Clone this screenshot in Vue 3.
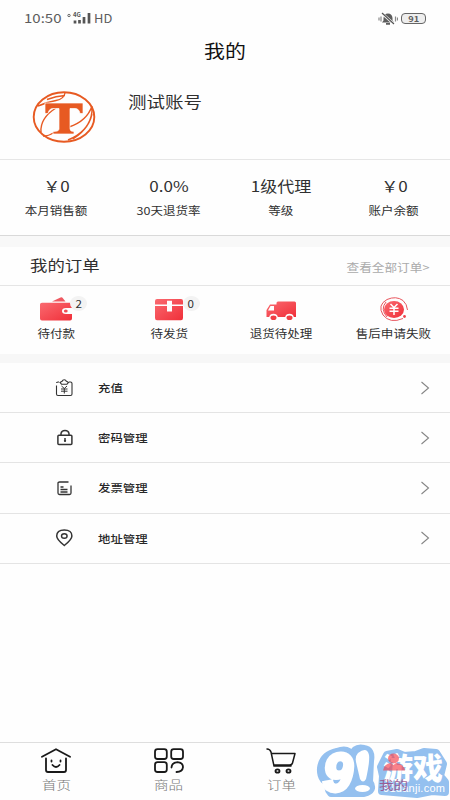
<script setup>
const stats = [
  { value: '￥0', label: '本月销售额', yen: true },
  { value: '0.0%', label: '30天退货率' },
  { value: '1级代理', label: '等级' },
  { value: '￥0', label: '账户余额', yen: true },
]
const orders = [
  { icon: 'wallet', label: '待付款', badge: '2' },
  { icon: 'box', label: '待发货', badge: '0' },
  { icon: 'truck', label: '退货待处理' },
  { icon: 'refund', label: '售后申请失败' },
]
const menu = [
  { icon: 'recharge', label: '充值' },
  { icon: 'lock', label: '密码管理' },
  { icon: 'invoice', label: '发票管理' },
  { icon: 'pin', label: '地址管理' },
]
const tabs = [
  { icon: 'home', label: '首页' },
  { icon: 'goods', label: '商品' },
  { icon: 'cart', label: '订单' },
  { icon: 'me', label: '' },
]
</script>

<template>
  <div class="screen">
    <div class="status">
      <div class="status-left">
        <span class="time"><span class="wide">10:50</span></span>
        <svg class="signal" width="25" height="14" viewBox="0 0 25 14">
          <circle cx="2" cy="4.500" r="1.200" fill="none" stroke="#666" />
          <text x="6" y="6.200" class="g4">4G</text>
          <path d="M8 9.500v3M12.500 9v3.500M17 6v6.500M22 2v10.500" stroke="#555" stroke-width="2.700" />
        </svg>
        <span class="hd"><span class="wide">HD</span></span>
      </div>
      <div class="status-right">
        <svg width="20" height="14" viewBox="0 0 20 14">
          <path d="M4 10.500l1.500-2V6Q6 1.500 10 1.500T14.500 6v2.500l1.500 2zM8 11h4v1.700H8z" fill="#5d5d5d" />
          <path d="M3 .5l13 11.500" stroke="#fff" stroke-width="2.600" />
          <path d="M4 1l12 11" stroke="#555" stroke-width="1.200" />
          <path d="M1 5.500v3M3 4.500v5M17.500 4.500v5M19.500 5.500v3" stroke="#888" stroke-width="1.200" />
        </svg>
        <div class="battery"><span class="wide">91</span></div>
      </div>
    </div>

    <header class="title"><span class="wide">我的</span></header>

    <section class="profile">
      <svg class="avatar" width="64" height="54" viewBox="0 0 64 54">
        <g fill="none" stroke="#e75a22">
          <ellipse cx="32" cy="27" rx="30.300" ry="24.700" stroke-width="1.900" />
          <path d="M6 16Q15 12 24 10.500Q32 9 33 3M15 9.500Q24 6 33 5.500M24 18Q8 28 9 42M11 46Q17 46 21 43M60 16Q55 31 37 37M60 17Q61 36 41 49M60 24Q56 42 36 50" stroke-width="1.400" />
        </g>
        <path d="M13 13h38v10.500h-3q-1-5-5-5h-5V39q0 2.500 4 2.500V44H21v-2.500q6 0 6-2.500V18.500h-6q-4 0-5 5h-3z" fill="#e75a22" stroke="#fff" stroke-width=".7" />
      </svg>
      <span class="name wide">测试账号</span>
    </section>

    <section class="stats">
      <div v-for="s in stats" :key="s.label" class="stat">
        <span class="value wide" :class="{ yen: s.yen }">{{ s.value }}</span>
        <span class="label wide">{{ s.label }}</span>
      </div>
    </section>

    <section class="orders">
      <div class="orders-head">
        <span class="heading wide">我的订单</span>
        <span class="more wide">查看全部订单&gt;</span>
      </div>
      <div class="order-grid">
        <div v-for="o in orders" :key="o.label" class="order">
          <div class="order-icon">
            <svg v-if="o.icon === 'wallet'" width="34" height="26" viewBox="0 0 34 26">
              <path d="M13 5.500l8.500-4q1.500-.6 2.200.4L26.500 5.500z" fill="#ef5961" />
              <path d="M3 6.700h28q2 0 2 1.800V12h-6q-4 0-4 3t4 3h6v4.500q0 2-2 2H3q-2 0-2-2v-14q0-1.800 2-1.800z" fill="url(#red)" />
              <ellipse cx="26.800" cy="15" rx="1.900" ry="1.500" fill="#f04c53" />
            </svg>
            <svg v-else-if="o.icon === 'box'" width="34" height="26" viewBox="0 0 34 26">
              <path d="M5 3h24q2 0 2 2v3.500H20V4.800h-5v3.700H3V5q0-2 2-2zM3 10h12v5.500h5V10h11v12q0 2.300-2 2.300H5q-2 0-2-2.300z" fill="url(#red)" />
            </svg>
            <svg v-else-if="o.icon === 'truck'" width="34" height="26" viewBox="0 0 34 26">
              <path d="M14 5.500h16.500q1.500 0 1.500 1.500v14h-2.200a4.400 4 0 0 0-8.600 0h-7.400a4.400 4 0 0 0-8.600 0H2.500v-7L6 8.500h6.500V7q0-1.500 1.500-1.500z" fill="url(#red)" />
              <path d="M6.500 10h3.500v4.500H4z" fill="#fff" />
              <ellipse cx="9.500" cy="21.800" rx="3" ry="2.300" fill="#f03e45" /><ellipse cx="25.500" cy="21.800" rx="3" ry="2.300" fill="#f03e45" />
            </svg>
            <svg v-else width="34" height="26" viewBox="0 0 34 26">
              <path d="M26 22.500Q13 28 6 19Q0 9 10 3.500Q19-.5 26 4.500Q30 8 30.500 14M10 21Q3 13 9 6" fill="none" stroke="#e9565e" stroke-width="1" />
              <ellipse cx="17" cy="13.500" rx="10" ry="8.500" fill="url(#red)" /><circle cx="27.500" cy="20.500" r="1.400" fill="#eb444b" />
              <path d="M13.500 8l3.500 3.500L20.500 8M12.500 12.300h9M12.500 15.300h9M17 11v8" fill="none" stroke="#fff" stroke-width="1.500" />
            </svg>
            <span v-if="o.badge" class="badge"><span class="wide">{{ o.badge }}</span></span>
          </div>
          <span class="label wide">{{ o.label }}</span>
        </div>
      </div>
    </section>

    <nav class="menu">
      <div v-for="m in menu" :key="m.label" class="row">
        <svg class="row-icon" width="20" height="20" viewBox="0 0 20 20" fill="none" stroke="#333" stroke-width="1.200">
          <template v-if="m.icon === 'recharge'">
            <path d="M5 4H4Q2.500 4 2.500 5M2.500 7.500V16q0 1.500 1.500 1.500h12.500q1.500 0 1.500-1.500V5.500Q18 4 16.500 4H15M6 4.500L8.500 3Q8.500 1.800 10.200 1.800T12 3L14.500 4.500L13 6.200H7.500z" stroke-width="1.100" />
            <path d="M7.500 8l2.800 2.500L13 8M7 11h6.500M7 13.200h6.500M10.300 10.500V15.500" stroke-width="1" />
          </template>
          <template v-else-if="m.icon === 'lock'">
            <rect x="3.900" y="7.300" width="14" height="9.300" rx="1" stroke-width="1.500" />
            <path d="M7 7V5.500Q7.500 2.500 11 2.500T15 5.500V7M11 10v4" stroke-width="1.500" /><ellipse cx="11" cy="12.800" rx="1.200" ry=".8" fill="#333" stroke="none" />
          </template>
          <template v-else-if="m.icon === 'invoice'">
            <path d="M14.500 4H5.500Q4 4 4 5v10q0 1.500 1.500 1.500h10q1.500 0 1.500-1.500V7.500M6.500 9H9.500M6.500 11.500H13.500M6.500 14H13.500" stroke-width="1.300" />
          </template>
          <template v-else>
            <path d="M10.300 17.500Q2.700 11.500 2.700 8Q2.700 2 10.300 2T17.900 8Q17.900 11.500 10.300 17.500z" stroke-width="1.500" /><ellipse cx="10.300" cy="8" rx="2.800" ry="2.200" stroke-width="1.400" />
          </template>
        </svg>
        <span class="row-label wide">{{ m.label }}</span>
        <svg class="chevron" width="10" height="14" viewBox="0 0 10 14"><path d="M1.500 1l7 6-7 6" fill="none" stroke="#858585" stroke-width="1.100" /></svg>
      </div>
    </nav>

    <footer class="tabs">
      <div v-for="t in tabs" :key="t.icon" class="tab" :class="t.icon">
        <svg v-if="t.label" width="34" height="28" viewBox="0 0 34 28" fill="none" stroke="#191919" stroke-width="1.800" stroke-linecap="round" stroke-linejoin="round">
          <template v-if="t.icon === 'home'">
            <path d="M3 9.700L17 2.200 31 9.700M7 11.500V23q0 2 2 2h16q2 0 2-2V11.500" />
            <path d="M12.500 13.500v1M21.500 13.500v1M13.500 18Q17 22 20.500 18" />
          </template>
          <template v-else-if="t.icon === 'goods'">
            <rect x="3" y="2.200" width="11.800" height="9.800" rx="2.500" /><rect x="19.200" y="2.200" width="11.800" height="9.800" rx="2.500" /><rect x="3" y="15.200" width="11.800" height="9.800" rx="2.500" />
            <path d="M19.500 20.500Q20 15.500 25.500 15.200Q31 15.700 31 20.200Q30.500 25 24.500 25" />
          </template>
          <template v-else>
            <path d="M3 2q3 0 4 3l3 14h17M7.500 6.500H31L28.500 16q-.5 2-3 2H10" stroke-width="1.500" />
            <ellipse cx="13.500" cy="24" rx="2" ry="1.700" /><ellipse cx="24.500" cy="24" rx="2" ry="1.700" />
          </template>
        </svg>
        <span v-if="t.label" class="tab-label wide">{{ t.label }}</span>
      </div>
      <svg class="watermark" width="138" height="56" viewBox="0 0 138 56">
        <g fill="#94c0ef" stroke="#94c0ef" stroke-linejoin="round">
          <path d="M25 8Q36 4 40 12Q43 3 52 5Q60 6 58 17L57 38Q63 46 52 49L19 49Q14 44 20 40Q8 37 9 24Q11 11 25 8z" stroke-width="8" />
          <path d="M75 11L85 9L92 12L104 11L112 8L124 9L131 20L128 32L133 38V48L120 47L105 50L70 47L71 32L69 23z" stroke-width="8" />
        </g>
        <text x="11" y="46.500" class="nine">9</text>
        <path d="M46 9Q55 2 57 11Q58 17 54 35Q51 40 48 35L44 18Q43 12 46 9z" fill="#fff" />
        <ellipse cx="50.500" cy="44.500" rx="7.500" ry="3.500" fill="#fff" />
        <text x="71" y="35" class="brand" textLength="60">游戏</text>
        <text x="71" y="48" class="domain" textLength="62">91danji.com</text>
        <g fill="#f53f4b" opacity=".65"><ellipse cx="81.500" cy="14.500" rx="5.500" ry="5" /><path d="M71 26.500Q72 19.500 79 19l2.500 2 2.500-2q8 1 9 7.500z" /></g>
      </svg>
      <span class="active-label wide">我的</span>
    </footer>

    <svg class="defs" width="0" height="0">
      <defs><linearGradient id="red" x1="0" y1="0" x2="1" y2="1"><stop stop-color="#fa6a70" /><stop offset="1" stop-color="#f02f39" /></linearGradient></defs>
    </svg>
  </div>
</template>

<style>
body { margin: 0; background: #fff; }
</style>

<style scoped>
.screen {
  width: 450px; height: 800px; overflow: hidden; position: relative;
  display: flex; flex-direction: column; background: #fefefe; color: #303030;
  font-family: "Noto Sans CJK SC", sans-serif; box-sizing: border-box;
}
.screen * { box-sizing: border-box; }
svg { display: block; flex: none; }
.wide { display: inline-block; transform: scaleX(1.16); white-space: nowrap; }
.status { height: 37px; display: flex; justify-content: space-between; padding: 0 24px 0 24px; align-items: center; color: #5c5c5c; }
.status-left, .status-right { display: flex; align-items: center; }
.time { width: 43px; font-size: 12.500px; line-height: 18px; margin-top: -1px; }
.time .wide { transform-origin: left; transform: scaleX(1.2); }
.signal { margin-bottom: 1px; overflow: visible; }
.g4 { font-size: 6px; font-weight: 700; fill: #555; }
.hd { font-size: 11.500px; line-height: 18px; margin: -1px 0 0 2px; }
.hd .wide { transform-origin: left; transform: scaleX(1.12); }
.battery { width: 25px; height: 11px; margin-left: 3px; border: 1.500px solid #666; border-radius: 4px; display: flex; align-items: center; justify-content: center; font-size: 8px; font-weight: 700; line-height: 8px; background: #eee; }
.title { height: 30px; line-height: 27px; text-align: center; font-size: 18px; color: #111; }
.profile { height: 93px; display: flex; padding: 23px 32px 0; border-bottom: 1px solid #e6e6e6; }
.name { transform-origin: left; font-size: 15.700px; line-height: 23px; margin-left: 32px; height: 24px; transform: scaleX(1.18); }
.stats { height: 76px; display: grid; grid-template-columns: repeat(4, 1fr); padding-top: 15px; border-bottom: 1px solid #d9d9d9; }
.stat { display: flex; flex-direction: column; align-items: center; }
.value { font-size: 14.700px; line-height: 22px; height: 25px; }
.yen { margin-left: 1px; }
.label { font-size: 10.800px; line-height: 20px; }
.orders { height: 127px; border-top: 11px solid #f8f8f8; border-bottom: 9px solid #f7f7f7; }
.orders-head { height: 39px; padding: 0 21px 0 30px; display: flex; justify-content: space-between; align-items: center; border-bottom: 1px solid #e5e5e5; }
.heading { font-size: 15px; transform-origin: left; margin-top: -4px; }
.more { font-size: 10.900px; color: #aaa; transform-origin: right; margin-top: 1px; }
.order-grid { display: grid; grid-template-columns: repeat(4, 1fr); padding-top: 10px; }
.order { display: flex; flex-direction: column; align-items: center; }
.order-icon { position: relative; height: 27px; }
.badge { position: absolute; left: 31px; top: 0; width: 17px; height: 15px; border-radius: 50%; background: #f3f3f3; font-size: 10px; line-height: 15px; text-align: center; }
.menu { height: 202px; }
.row { height: 50.200px; display: flex; align-items: center; padding: 0 20px 0 54px; border-bottom: 1px solid #e4e4e4; }
.row-label { font-size: 10.700px; font-weight: 500; margin-left: 24px; transform-origin: left; color: #272727; }
.chevron { margin-left: auto; }
.tabs { height: 58px; margin-top: auto; display: grid; grid-template-columns: repeat(4, 1fr); border-top: 1px solid #dedede; position: relative; }
.tab { display: flex; flex-direction: column; align-items: center; padding-top: 4px; }
.tab-label { font-size: 12.500px; line-height: 18px; color: #777; font-weight: 300; margin-top: 1px; }
.watermark { position: absolute; left: 312px; top: 1px; overflow: visible; }
.nine { font-family: "Liberation Sans", sans-serif; font-weight: 700; font-style: italic; font-size: 53px; fill: #fff; stroke: #fff; stroke-width: 4px; }
.brand { font-weight: 900; font-size: 30px; fill: #fff; }
.domain { font-family: "Liberation Sans", sans-serif; font-size: 11px; fill: #fff; }
.active-label { position: absolute; left: 381px; top: 33px; font-size: 12.500px; line-height: 18px; color: #994d86; opacity: .85; }
.defs { position: absolute; }
</style>
